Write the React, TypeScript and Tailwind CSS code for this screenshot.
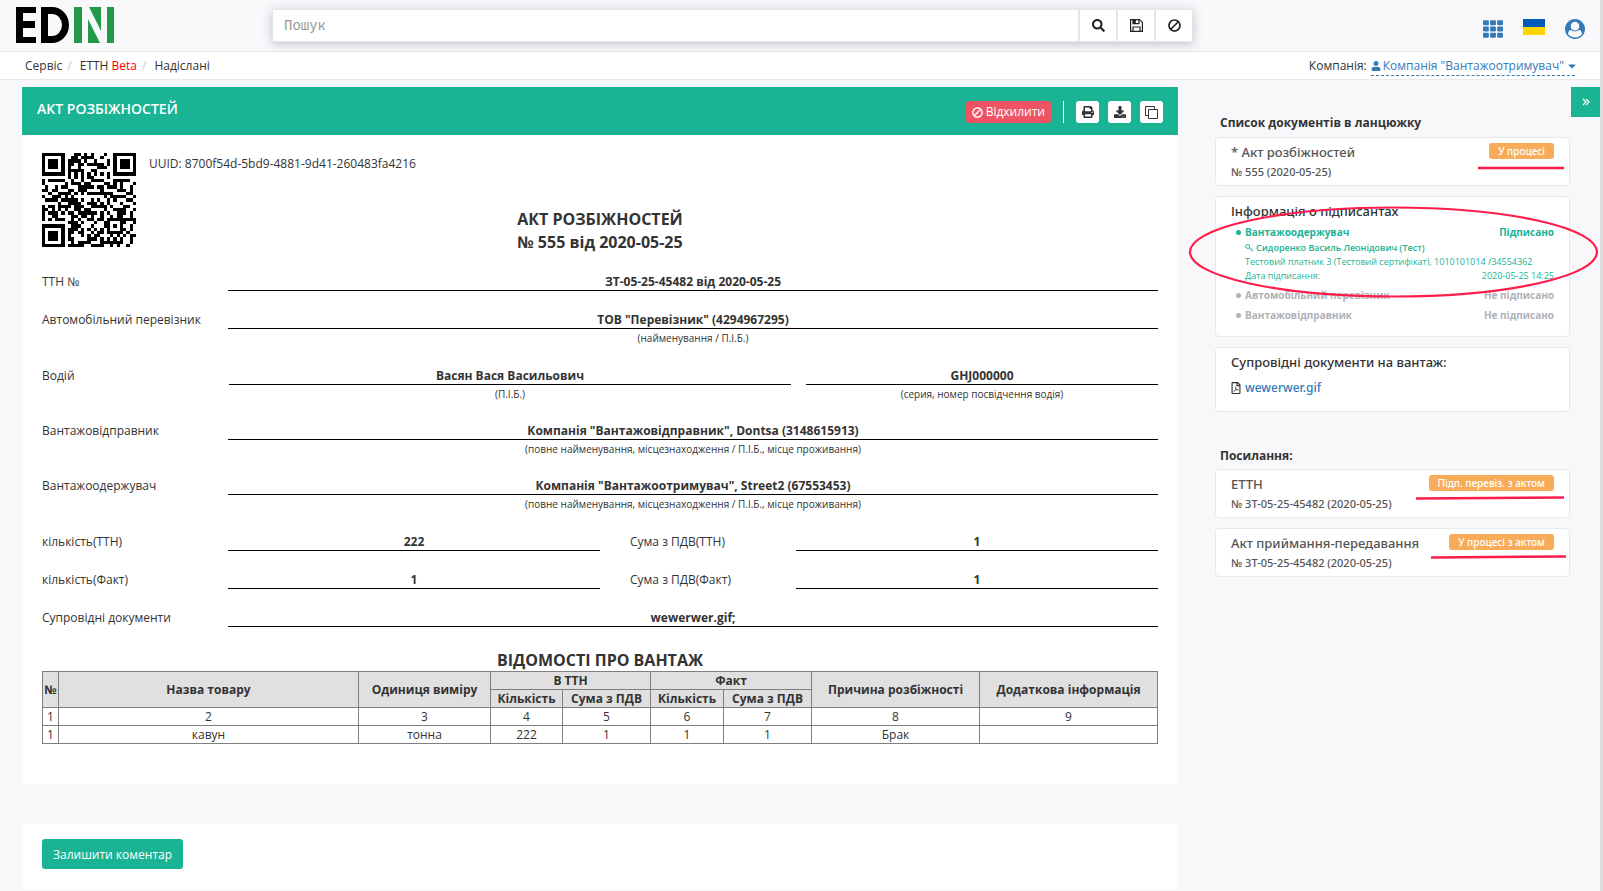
import React from "react";
import { FaSearch, FaBan, FaPrint, FaDownload, FaUser, FaRegFilePdf, FaTh, FaCaretDown } from "react-icons/fa";

/* ---------- QR code, version 3, level M, byte mode, mask 2 ---------- */

const SIZE = 29;
const DATA_WORDS = 44;
const EC_WORDS = 26;
const FORMAT = "101111001111100";

function gfMul(a: number, b: number): number {
  let r = 0;
  for (let i = 7; i >= 0; i--) {
    r = (r << 1) ^ ((r >>> 7) * 0x11d);
    r ^= ((b >>> i) & 1) * a;
  }
  return r;
}

function codewords(text: string): number[] {
  let bits = "0100" + text.length.toString(2).padStart(8, "0");
  for (const c of text) bits += c.charCodeAt(0).toString(2).padStart(8, "0");
  bits += "0000";
  while (bits.length % 8) bits += "0";
  const data: number[] = [];
  for (let i = 0; i < bits.length; i += 8) data.push(parseInt(bits.slice(i, i + 8), 2));
  for (let pad = 0xec; data.length < DATA_WORDS; pad ^= 0xec ^ 0x11) data.push(pad);

  const gen: number[] = new Array(EC_WORDS).fill(0);
  gen[EC_WORDS - 1] = 1;
  let root = 1;
  for (let i = 0; i < EC_WORDS; i++) {
    for (let j = 0; j < EC_WORDS; j++) {
      gen[j] = gfMul(gen[j], root);
      if (j + 1 < EC_WORDS) gen[j] ^= gen[j + 1];
    }
    root = gfMul(root, 2);
  }
  const rem: number[] = new Array(EC_WORDS).fill(0);
  for (const b of data) {
    const f = b ^ (rem.shift() as number);
    rem.push(0);
    gen.forEach((g, i) => (rem[i] ^= gfMul(g, f)));
  }
  return [...data, ...rem];
}

function qrPath(text: string): string {
  const m: (boolean | null)[][] = Array.from({ length: SIZE }, () => new Array(SIZE).fill(null));
  const square = (cy: number, cx: number, radius: number, light: number) => {
    for (let dy = -radius; dy <= radius; dy++)
      for (let dx = -radius; dx <= radius; dx++) {
        const y = cy + dy;
        const x = cx + dx;
        if (y < 0 || x < 0 || y >= SIZE || x >= SIZE) continue;
        const d = Math.max(Math.abs(dx), Math.abs(dy));
        m[y][x] = d !== light && d !== 4;
      }
  };
  for (let i = 0; i < SIZE; i++) {
    m[6][i] = i % 2 === 0;
    m[i][6] = i % 2 === 0;
  }
  square(3, 3, 4, 2);
  square(3, SIZE - 4, 4, 2);
  square(SIZE - 4, 3, 4, 2);
  square(22, 22, 2, 1);
  for (let i = 0; i < 15; i++) {
    const on = FORMAT[i] === "1";
    if (i < 6) m[8][i] = on;
    else if (i === 6) m[8][7] = on;
    else if (i === 7) m[8][8] = on;
    else if (i === 8) m[7][8] = on;
    else m[14 - i][8] = on;
    if (i < 7) m[SIZE - 1 - i][8] = on;
    else m[8][SIZE - 15 + i] = on;
  }
  m[SIZE - 8][8] = true;

  const words = codewords(text);
  let n = 0;
  for (let right = SIZE - 1; right >= 1; right -= 2) {
    if (right === 6) right = 5;
    for (let v = 0; v < SIZE; v++) {
      for (let j = 0; j < 2; j++) {
        const x = right - j;
        const upward = ((right + 1) & 2) === 0;
        const y = upward ? SIZE - 1 - v : v;
        if (m[y][x] !== null) continue;
        const bit = n < words.length * 8 ? (words[n >> 3] >>> (7 - (n & 7))) & 1 : 0;
        n++;
        m[y][x] = (bit === 1) !== (x % 3 === 0);
      }
    }
  }
  let d = "";
  m.forEach((row, y) => row.forEach((on, x) => on && (d += `M${x} ${y}h1v1h-1z`)));
  return d;
}

const UUID = "8700f54d-5bd9-4881-9d41-260483fa4216";
const QR = qrPath(UUID);

/* ---------- Icons ---------- */

const FloppyIcon = () => (
  <svg className="h-[13px] w-[13px]" viewBox="0 0 13 13" fill="none" stroke="currentColor" strokeWidth="1.2" aria-hidden="true">
    <path d="M.6.6h9l2.8 2.8v9H.6z" />
    <path d="M3 12V8h7v4" />
    <path d="M3 .6V4.6h6V.6" />
    <path fill="currentColor" stroke="none" d="M3 .6h2.8v4H3z" />
  </svg>
);

const CopyIcon = () => (
  <svg className="h-[13px] w-[13px]" viewBox="0 0 13 13" fill="none" stroke="currentColor" aria-hidden="true">
    <path d="M3 9.5H.5v-9h9V3" />
    <path d="M3.5 3.5h9v9h-9z" />
  </svg>
);

const KeyIcon = () => (
  <svg className="h-2 w-2" viewBox="0 0 8 8" fill="none" stroke="currentColor" aria-hidden="true">
    <ellipse cx="2.7" cy="2.5" rx="2.1" ry="1.9" />
    <path d="M4.2 3.9L7.5 7M5.4 5.6l1-1.1M6.5 7l1-1.3" />
  </svg>
);

const UserCircleIcon = () => (
  <svg className="h-5 w-5" viewBox="0 0 1792 1792" fill="currentColor" aria-hidden="true">
    <path d="M1523 1339q-22-155-87.5-257.5t-184.500-118.500q-67 74-159.500 115.500t-195.500 41.500-195.500-41.500-159.500-115.500q-119 16-184.500 118.500t-87.500 257.500q106 150 271 237.500t356 87.500 356-87.500 271-237.500zm-243-699q0-159-112.500-271.500t-271.500-112.500-271.500 112.500-112.500 271.500 112.500 271.500 271.500 112.500 271.500-112.500 112.500-271.500zm512 256q0 182-71 347.500t-190.500 286-285.500 191.500-349 71-348.500-71-286-191-191-286-71-348 71-348 191-286 286-191 348-71 348 71 286 191 191 286 71 348z" />
  </svg>
);

/* ---------- Form rows ---------- */

function Line({ value, caption }: { value: string; caption?: string }) {
  return (
    <div className="text-center">
      <div className="h-[19px] border-b border-black font-bold leading-[20px]">{value}</div>
      {caption && <div className="text-[10px] leading-[18px]">{caption}</div>}
    </div>
  );
}

function Row({ label, value, caption }: { label: string; value: string; caption?: string }) {
  return (
    <div className={caption ? "grid h-[55px] grid-cols-[186px_1fr]" : "grid h-[38px] grid-cols-[186px_1fr]"}>
      <div className="leading-[20px]">{label}</div>
      <Line value={value} caption={caption} />
    </div>
  );
}

function PairRow({ a, av, b, bv }: { a: string; av: string; b: string; bv: string }) {
  return (
    <div className="grid h-[38px] grid-cols-[186px_372fr_30px_166px_362fr] leading-[20px]">
      <div>{a}</div>
      <Line value={av} />
      <div />
      <div>{b}</div>
      <Line value={bv} />
    </div>
  );
}

/* ---------- Side cards ---------- */

function DocCard({ title, number, status, mark }: { title: string; number: string; status: string; mark: React.ReactNode }) {
  return (
    <div className="relative h-[49px] rounded border border-[#e7eaec] bg-white px-[15px] pt-[5px] font-['Noto_Sans','Open_Sans',sans-serif] font-medium text-[#555]">
      <div className="flex items-start justify-between">
        <span className="text-[13px] leading-[19px]">{title}</span>
        <span className="rounded-[3px] bg-[#f8ac59] px-[9px] text-[10px] leading-[16px] text-white">{status}</span>
      </div>
      <div className="text-[11px] leading-[19px]">{number}</div>
      {mark}
    </div>
  );
}

const toolBtn = "flex h-[22px] w-[23px] items-center justify-center rounded-[3px] bg-white text-[12px] text-[#333]";
const searchBtn = "flex w-[38px] items-center justify-center border-l-2 border-[#e5e6e7] text-[13px] text-[#222]";
const th = "border border-[#7f7f7f] bg-[#e0e0e0] p-0 font-bold";
const td = "border border-[#7f7f7f] p-0";

export default function App() {
  return (
    <div className="min-h-screen border-r-[3px] border-[#dcdcdc] bg-[#f8f8fb] font-['Open_Sans','Noto_Sans',sans-serif] text-[12px] leading-[18px] text-[#333]">
      <header className="flex h-[52px] border-b border-[#e7eaec] bg-[#f9f9fb] pl-4">
        <svg className="mt-[7px] h-9 w-[98px]" viewBox="0 0 98 36" role="img" aria-label="EDIN">
          <path d="M0 0h20v6H7v8h12v7H7v9h13v6H0z" />
          <path fillRule="evenodd" d="M25 0h11a17 18 0 0 1 0 36H25zM32 7v22h4a10 11 0 0 0 0-22z" />
          <path fill="#229a48" d="M58 0h8v36h-8zM73 0h12v24zM72 12l12 24H72zM91 0h7v36h-7z" />
        </svg>
        <form className="ml-[158px] mt-[9px] flex h-[33px] w-[921px] border border-[#e5e6e7] bg-white shadow-[0_2px_10px_rgba(60,60,110,0.3)]">
          <input aria-label="Пошук" placeholder="Пошук" className="min-w-0 flex-1 px-[11px] font-['Liberation_Mono',monospace] text-[14px] outline-none placeholder:text-[#999]" />
          <button type="button" aria-label="Знайти" className={searchBtn}><FaSearch /></button>
          <button type="button" aria-label="Зберегти" className={searchBtn}><FloppyIcon /></button>
          <button type="button" aria-label="Скинути" className={searchBtn}><FaBan className="-scale-x-100" /></button>
        </form>
        <div className="ml-auto flex items-start gap-5 pr-[15px] pt-[19px] text-[#337ab7]">
          <button type="button" aria-label="Меню"><FaTh size={20} /></button>
          <svg className="h-4 w-[22px]" viewBox="0 0 22 16" aria-hidden="true">
            <path fill="#005bbb" d="M0 0h22v8H0z" />
            <path fill="#ffd500" d="M0 8h22v8H0z" />
          </svg>
          <button type="button" aria-label="Профіль"><UserCircleIcon /></button>
        </div>
      </header>

      <nav className="flex h-7 items-center justify-between border-b border-[#e7eaec] bg-white px-[25px]">
        <div className="flex">
          <a href="#service">Сервіс</a>
          <span className="px-[5px] text-[#ccc]">/</span>
          <a href="#ettn" className="pl-[3px]">ЕТТН <span className="text-[#f00]">Beta</span></a>
          <span className="px-[5px] text-[#ccc]">/</span>
          <a href="#sent" className="pl-[3px]">Надіслані</a>
        </div>
        <div className="flex items-center gap-1 pt-px">
          Компанія:
          <a href="#company" className="flex items-center gap-[2px] border-b border-dashed border-[#337ab7] text-[#337ab7]">
            <FaUser size={10} />
            Компанія "Вантажоотримувач"
            <FaCaretDown size={12} className="-mr-[3px]" />
          </a>
        </div>
      </nav>

      <div className="flex items-start pl-[22px] pt-[7px]">
        <main className="min-w-0 flex-1">
          <section className="bg-white">
            <div className="flex h-12 items-start bg-[#1ab394] px-[15px] text-white">
              <h1 className="flex-1 pt-[13px] text-[14px] font-semibold">АКТ РОЗБІЖНОСТЕЙ</h1>
              <div className="flex items-center pt-[14px]">
                <button type="button" className="flex h-[22px] items-center gap-[3px] rounded-[3px] bg-[#ed5565] px-[6px]"><FaBan size={11} className="-scale-x-100" />Відхилити</button>
                <span className="mx-3 h-[22px] w-px bg-white" />
                <div className="flex gap-[9px]">
                  <button type="button" aria-label="Друк" className={toolBtn}><FaPrint /></button>
                  <button type="button" aria-label="Завантажити" className={toolBtn}><FaDownload /></button>
                  <button type="button" aria-label="Копіювати" className={toolBtn}><CopyIcon /></button>
                </div>
              </div>
            </div>

            <div className="px-5 pb-10 pt-[18px]">
              <div className="flex gap-[13px]">
                <svg className="h-[94px] w-[94px]" viewBox="0 0 29 29" shapeRendering="crispEdges" role="img" aria-label="QR">
                  <path d={QR} />
                </svg>
                <div className="pt-[2px]">UUID: {UUID}</div>
              </div>

              <h2 className="-mt-[39px] mb-[18px] text-center text-[16px] font-bold leading-[23px]">
                <span className="inline-block text-left">АКТ РОЗБІЖНОСТЕЙ<br />№ 555 від 2020-05-25</span>
              </h2>

              <Row label="ТТН №" value="ЗТ-05-25-45482 від 2020-05-25" />
              <Row label="Автомобільний перевізник" value='ТОВ "Перевізник" (4294967295)' caption="(найменування / П.І.Б.)" />
              <div className="mt-px grid h-[55px] grid-cols-[187px_562fr_15px_352fr] leading-[20px]">
                <div>Водій</div>
                <Line value="Васян Вася Васильович" caption="(П.І.Б.)" />
                <div />
                <Line value="GHJ000000" caption="(серия, номер посвідчення водія)" />
              </div>
              <Row label="Вантажовідправник" value={'Компанія "Вантажовідправник", Dontsa (3148615913)'} caption="(повне найменування, місцезнаходження / П.І.Б., місце проживання)" />
              <Row label="Вантажоодержувач" value={'Компанія "Вантажоотримувач", Street2 (67553453)'} caption="(повне найменування, місцезнаходження / П.І.Б., місце проживання)" />
              <div className="pt-px">
                <PairRow a="кількість(ТТН)" av="222" b="Сума з ПДВ(ТТН)" bv="1" />
                <PairRow a="кількість(Факт)" av="1" b="Сума з ПДВ(Факт)" bv="1" />
                <Row label="Супровідні документи" value="wewerwer.gif;" />
              </div>

              <h3 className="pt-[3px] text-center text-[16px] font-bold leading-[22px]">ВІДОМОСТІ ПРО ВАНТАЖ</h3>
              <table className="w-full table-fixed border-collapse text-center leading-[17px]">
                <colgroup>
                  <col className="w-[16px]" />
                  <col className="w-[300px]" />
                  <col className="w-[132px]" />
                  <col className="w-[72px]" />
                  <col className="w-[88px]" />
                  <col className="w-[73px]" />
                  <col className="w-[88px]" />
                  <col className="w-[168px]" />
                  <col className="w-[178px]" />
                </colgroup>
                <thead>
                  <tr>
                    <th rowSpan={2} className={th}>№</th>
                    <th rowSpan={2} className={th}>Назва товару</th>
                    <th rowSpan={2} className={th}>Одиниця виміру</th>
                    <th colSpan={2} className={th}>В ТТН</th>
                    <th colSpan={2} className={th}>Факт</th>
                    <th rowSpan={2} className={th}>Причина розбіжності</th>
                    <th rowSpan={2} className={th}>Додаткова інформація</th>
                  </tr>
                  <tr>
                    <th className={th}>Кількість</th>
                    <th className={th}>Сума з ПДВ</th>
                    <th className={th}>Кількість</th>
                    <th className={th}>Сума з ПДВ</th>
                  </tr>
                </thead>
                <tbody>
                  {[
                    ["1", "2", "3", "4", "5", "6", "7", "8", "9"],
                    ["1", "кавун", "тонна", "222", "1", "1", "1", "Брак", ""],
                  ].map((cells, r) => (
                    <tr key={r}>
                      {cells.map((c, i) => (
                        <td key={i} className={td}>{c}</td>
                      ))}
                    </tr>
                  ))}
                </tbody>
              </table>
            </div>
          </section>

          <section className="mt-10 bg-white px-5 pb-5 pt-[15px]">
            <button type="button" className="h-[30px] rounded-[3px] bg-[#1ab394] px-[11px] pt-px text-white">Залишити коментар</button>
          </section>
        </main>

        <aside className="relative ml-[37px] w-[385px] shrink-0 pr-[30px] pt-[27px]">
          <button type="button" aria-label="Згорнути" className="absolute right-0 top-0 flex h-[30px] w-[29px] items-center justify-center bg-[#1ab394] text-white">
            <svg className="h-2 w-2" viewBox="0 0 8 8" fill="none" stroke="currentColor" strokeWidth="1.2" aria-hidden="true">
              <path d="M1 1l3 3-3 3M4 1l3 3-3 3" />
            </svg>
          </button>
          <h4 className="mb-[5px] pl-[5px] font-bold">Список документів в ланцюжку</h4>
          <div className="flex flex-col gap-[10px]">
            <DocCard title="* Акт розбіжностей" number="№ 555 (2020-05-25)" status="У процесі" mark={
              <svg className="absolute right-[4px] top-[28px] h-1 w-[88px]" viewBox="0 0 88 4" aria-hidden="true"><path stroke="#ff1c4b" strokeWidth="2.5" d="M1 2h86" /></svg>
            } />

            <div className="relative h-[141px] rounded border border-[#e7eaec] bg-white px-[15px] pt-1">
              <div className="font-['Noto_Sans','Open_Sans',sans-serif] text-[13px] font-medium leading-5">Інформація о підписантах</div>
              <ul className="pt-[2px] text-[10px]">
                <li className="relative pb-[2px] pl-[14px] text-[#1ab394]">
                  <span className="absolute left-[5px] top-[7px] h-[5px] w-[5px] rounded-full bg-[#1ab394]" />
                  <div className="flex justify-between font-bold"><span>Вантажоодержувач</span><span>Підписано</span></div>
                  <div className="flex items-center gap-[3px] text-[9px] font-semibold leading-[14px]"><KeyIcon />Сидоренко Василь Леонідович (Тест)</div>
                  <div className="whitespace-nowrap text-[9px] leading-[14px]">Тестовий платник 3 (Тестовий сертифікат), 1010101014 /34554362</div>
                  <div className="flex justify-between text-[9px] leading-[13px]"><span>Дата підписання:</span><span>2020-05-25 14:25</span></div>
                </li>
                {["Автомобільний перевізник", "Вантажовідправник"].map((name) => (
                  <li key={name} className="relative flex justify-between pl-[14px] pt-[2px] font-bold text-[#aeb2b7]">
                    <span className="absolute left-[5px] top-[9px] h-[5px] w-[5px] rounded-full bg-[#aeb2b7]" />
                    <span>{name}</span>
                    <span>Не підписано</span>
                  </li>
                ))}
              </ul>
              <svg className="pointer-events-none absolute left-[-28px] top-[8px] h-[94px] w-[412px]" viewBox="0 0 412 94" aria-hidden="true">
                <ellipse cx="205.500" cy="47" rx="203.500" ry="44.500" fill="none" stroke="#ff1c4b" strokeWidth="2.2" />
              </svg>
            </div>

            <div className="h-[65px] rounded border border-[#e7eaec] bg-white px-[15px] pt-[4px] font-['Noto_Sans','Open_Sans',sans-serif] text-[13px] font-medium leading-5">
              <div>Супровідні документи на вантаж:</div>
              <a href="#file" className="mt-[6px] flex items-center gap-1 text-[12px] text-[#337ab7]"><FaRegFilePdf size={12} className="w-[10px] text-[#333]" />wewerwer.gif</a>
            </div>
          </div>

          <h4 className="mb-[4px] mt-[35px] pl-[5px] font-bold">Посилання:</h4>
          <div className="flex flex-col gap-[10px]">
            <DocCard title="ЕТТН" number="№ ЗТ-05-25-45482 (2020-05-25)" status="Підп. перевіз. з актом" mark={
              <svg className="absolute right-[4px] top-[26px] h-1 w-[150px]" viewBox="0 0 150 4" aria-hidden="true"><path stroke="#ff1c4b" strokeWidth="2.5" d="M1 2.500L149 1.500" /></svg>
            } />
            <DocCard title="Акт приймання-передавання" number="№ ЗТ-05-25-45482 (2020-05-25)" status="У процесі з актом" mark={
              <svg className="absolute right-[2px] top-[26px] h-1 w-[137px]" viewBox="0 0 137 4" aria-hidden="true"><path stroke="#ff1c4b" strokeWidth="2.5" d="M1 2.500L136 1.500" /></svg>
            } />
          </div>
        </aside>
      </div>
    </div>
  );
}
